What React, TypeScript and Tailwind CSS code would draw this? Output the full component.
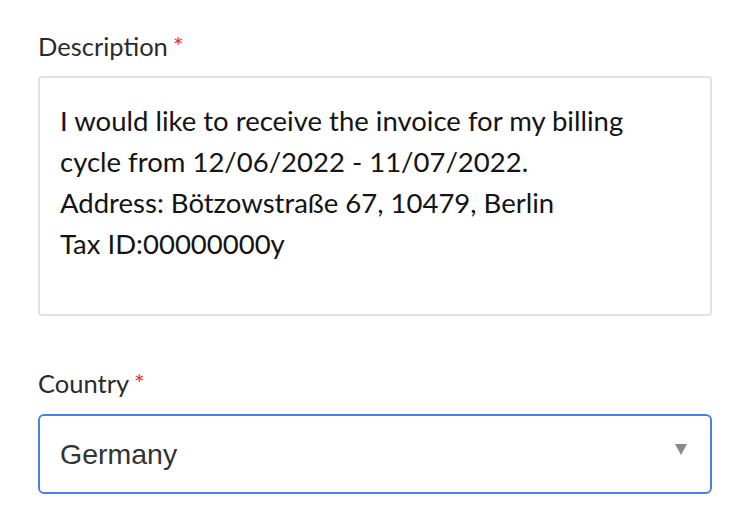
import React from "react";

const App = () => {
  return (
    <div className="min-h-[518px] w-[750px] bg-white px-[38px] pt-[30px] font-['Lato',sans-serif]">
      {/* Description */}
      <label className="block text-[25.5px] leading-[32px] text-[#2b2b2b]">
        Description
        <span className="ml-[5px] text-[#e53935]">*</span>
      </label>
      <textarea
        readOnly
        className="mt-[14px] block h-[240px] w-full resize-none rounded-[4px] border-2 border-[#e2e2e2] px-[20px] py-[22px] text-[27.5px] leading-[41px] text-[#141414] outline-none"
        defaultValue={
          "I would like to receive the invoice for my billing cycle from 12/06/2022 - 11/07/2022.\nAddress: Bötzowstraße 67, 10479, Berlin\nTax ID:00000000y"
        }
      />

      {/* Country */}
      <label className="mt-[51px] block text-[25.5px] leading-[32px] text-[#2b2b2b]">
        Country
        <span className="ml-[5px] text-[#e53935]">*</span>
      </label>
      <div className="mt-[15px] flex h-[80px] w-full items-center justify-between rounded-[6px] border-2 border-[#4a80e4] pl-[20px] pr-[23px]">
        <span className="font-['Liberation_Sans',sans-serif] text-[28.5px] text-[#333333]">
          Germany
        </span>
        <svg width="12" height="11" viewBox="0 0 12 11" className="mb-[10px]">
          <path d="M0 0 H12 L6 11 Z" fill="#8a8a8a" />
        </svg>
      </div>
    </div>
  );
};

export default App;
